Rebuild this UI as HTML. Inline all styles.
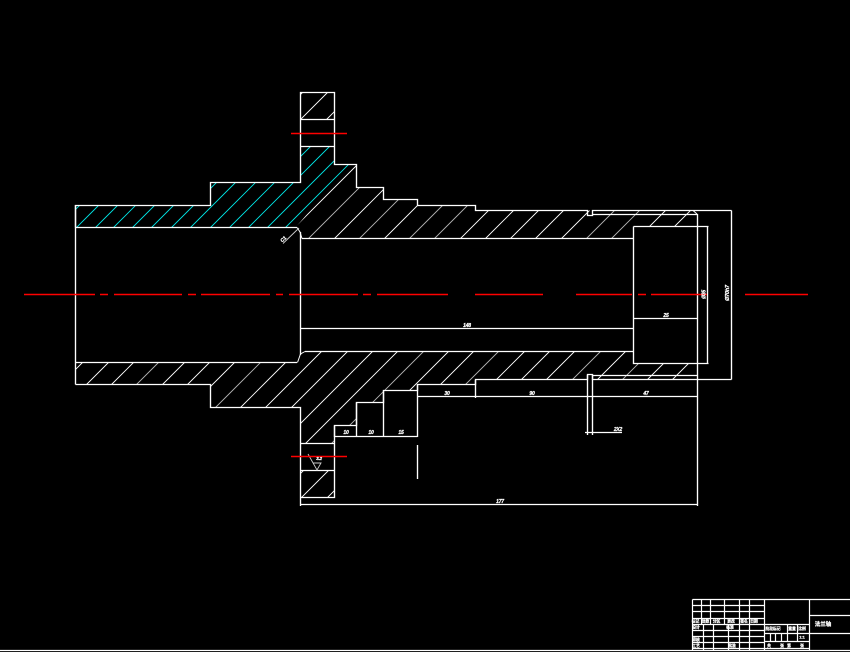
<!DOCTYPE html>
<html><head><meta charset="utf-8"><style>
html,body{margin:0;padding:0;background:#000;width:850px;height:652px;overflow:hidden}
svg{display:block}
text{font-family:"Liberation Sans","Noto Sans CJK SC",sans-serif;fill:#fff;stroke:#fff;stroke-width:.25;font-weight:bold}
.d{font-size:5px;text-anchor:middle;font-style:italic;letter-spacing:-.2px}
.t{font-size:3.8px;text-anchor:middle}
</style></head><body>
<svg width="850" height="652" viewBox="0 0 850 652" xmlns="http://www.w3.org/2000/svg">
<defs>
<clipPath id="cy"><polygon points="75,227 75,205 210,205 210,182 300,182 300,146 334,146 334,164 350,164 296,227"/></clipPath>
<clipPath id="tw"><polygon points="296,227 350,164 356,164 356,187 384,187 384,199 418,199 418,205 476,205 476,210.5 693,210.5 697,214 697,226 633,226 633,238 302,238 300,232"/></clipPath>
<clipPath id="bw"><polygon points="75,362 297,362 300,354 305,351 633,351 633,363 697,363 697,379.5 476,379.5 476,384 417,384 417,390 383,390 383,402 356,402 356,425 334,425 334,443 300,443 300,407 210,407 210,384 75,384"/></clipPath>
<clipPath id="b1"><rect x="300" y="92" width="34" height="27"/></clipPath>
<clipPath id="b2"><rect x="300" y="470" width="34" height="27"/></clipPath>
</defs>
<rect width="850" height="652" fill="#000"/>

<!-- cyan hatch -->
<g clip-path="url(#cy)" stroke="#00e6e6" stroke-width="0.95" fill="none">
<path d="M-165 450L235 50M-146 450L254 50M-127 450L273 50M-109 450L291 50M-90 450L310 50M-71 450L329 50M-51 450L349 50M-32 450L368 50M-12 450L388 50M7 450L407 50M26 450L426 50M45 450L445 50M63 450L463 50"/>
</g>
<!-- white hatch top wall -->
<g clip-path="url(#tw)" stroke="#fff" stroke-width="0.95" fill="none">
<path d="M72 450L472 50M123 450L523 50M173 450L573 50M249 450L649 50M274 450L674 50M299 450L699 50M324 450L724 50M350 450L750 50M426 450L826 50M451 450L851 50"/>
<path stroke="#b4b4b4" d="M97 450L497 50M148 450L548 50M198 450L598 50M223 450L623 50M375 450L775 50M400 450L800 50"/>
</g>
<!-- white hatch bottom wall -->
<g clip-path="url(#bw)" stroke="#fff" stroke-width="0.95" fill="none">
<path d="M-5 450L395 50M21 450L421 50M46 450L446 50M97 450L497 50M122 450L522 50M147 450L547 50M198 450L598 50M223 450L623 50M249 450L649 50M274 450L674 50M299 450L699 50M350 450L750 50M375 450L775 50M426 450L826 50M451 450L851 50M476 450L876 50M527 450L927 50M577 450L977 50M602 450L1002 50"/>
<path stroke="#b4b4b4" d="M71 450L471 50M173 450L573 50M325 450L725 50M400 450L800 50M502 450L902 50M552 450L952 50"/>
</g>
<g clip-path="url(#b1)" stroke="#fff" stroke-width="0.95" fill="none"><path d="M265 130L395 0M290 130L420 0M316 130L446 0"/></g>
<g clip-path="url(#b2)" stroke="#fff" stroke-width="0.95" fill="none"><path d="M274 500L374 400M299 500L399 400M325 500L425 400"/></g>

<!-- outlines -->
<g stroke="#fff" stroke-width="1.35" fill="none">
<path d="M75.5 227.5V205.5H210.5V182.5H300.5V92.5H334.5V164.5H356.5V187.5H383.5V199.5H417.5V205.5H475.5V210.5H587.5V215.5H592.5V210.5H731.5"/>
<path d="M592.5 214.5H697.5V506"/>
<path d="M75.5 227.5H297M75.5 205V384.5M300.5 232V355M302 238.5H633.5"/>
<path d="M75.5 362.5H297M305 351.5H633.5"/>
<path d="M75.5 384.5H210.5V407.5H300.5V506"/>
<path d="M300.5 119.5H334.5M300.5 146.5H334.5"/>
<path d="M300.5 443.5H334.5M300.5 470.5H334.5M300.5 497.5H334.5V425.5H356.5V402.5H383.5V390.5H417.5V384.5H475.5V379.5H587.5V374.5H592.5V379.5H731.5"/>
<path d="M592.5 375.5H697.5"/>
<path d="M633.5 226.5H708.5M633.5 226.5V363.5H708.5M707.5 226.5V363.5M633.5 318.5H697.5M300.5 328.5H633.5"/>
<path d="M731.5 210.5V379.5"/>
<path d="M334.5 436.5H417.5M417.5 384.5V437M356.5 402.5V437M383.5 390.5V437M334.5 425.5V437"/>
<path d="M417.5 396.5H697.5M475.5 380V398"/>
<path d="M587.5 375V435M592.5 375V435M585 432.5H622"/>
<path d="M417.5 445V479"/>
<path d="M300.5 504.5H697.5"/>
</g>
<g stroke="#fff" stroke-width="1" fill="none">
<path d="M297 227.5L300 232L302 238.5M297.5 362.5L300.5 354L305 351.5M693 210.5L697 214"/>
<path stroke="#ccc" stroke-width="0.9" d="M283 243.5L299 228M308 454L317 470L321 463H313"/>
</g>

<!-- centre lines -->
<g stroke="#ff0000" stroke-width="1.4" fill="none">
<path d="M24 294.5H95M100 294.5H108M114 294.5H182M188 294.5H196M201 294.5H270M276 294.5H283M289 294.5H358M363 294.5H371M377 294.5H448M475 294.5H543M576 294.5H632M638 294.5H646M651 294.5H707M745 294.5H808"/>
</g>
<line x1="291" y1="133.5" x2="347" y2="133.5" stroke="#ff0000" stroke-width="1.4"/>
<line x1="291" y1="456.5" x2="347" y2="456.5" stroke="#ff0000" stroke-width="1.4"/>

<!-- dimension text -->
<text class="d" x="467" y="327">148</text>
<text class="d" x="666" y="317">25</text>
<text class="d" x="447" y="395">30</text>
<text class="d" x="532" y="395">90</text>
<text class="d" x="646" y="395">47</text>
<text class="d" x="618" y="431">2X2</text>
<text class="d" x="346" y="434">10</text>
<text class="d" x="371" y="434">10</text>
<text class="d" x="401" y="434">15</text>
<text class="d" x="500" y="503">177</text>
<text class="d" x="283" y="241" transform="rotate(-45 283 239)">C1</text>
<text class="d" x="319" y="460" style="font-size:4.6px">3.2</text>
<text class="d" transform="translate(705.5 294.5) rotate(-90)">Ø35</text>
<text class="d" transform="translate(729 293) rotate(-90)" style="font-size:5.5px">Ø70h7</text>

<!-- title block -->
<g stroke="#fff" stroke-width="1.2" fill="none">
<path d="M0 650.5H850"/>
<path d="M692.5 599.5H850M692.5 605.5H764M692.5 611.5H764M692.5 618.5H764M692.5 624.5H809M692.5 630.5H764M692.5 636.5H764M692.5 642.5H764M692.5 648.5H809"/>
<path d="M692.5 599.5V650M764.5 599.5V650M809.5 599.5V650"/>
<path d="M701.5 599.5V624M710.5 599.5V624M724.5 599.5V624M739.5 599.5V650M749.5 599.5V650"/>
<path d="M703.5 624V650M713.5 624V650M728.5 624V650"/>
<path d="M809.5 615.5H850M809.5 633.5H850M764.5 633.5H809M764.5 641.5H809"/>
<path d="M787.5 624V641M797.5 624V641M770.5 633V641M775.5 633V641M781.5 633V641"/>
</g>
<g>
<text class="t" x="695.5" y="622.5">标记</text>
<text class="t" x="705.5" y="622.5">处数</text>
<text class="t" x="716.5" y="622.5">分区</text>
<text class="t" x="731" y="622.5">更改</text>
<text class="t" x="744" y="622.5">签名</text>
<text class="t" x="754" y="622.5">日期</text>
<text class="t" x="696" y="628.5">设计</text>
<text class="t" x="730" y="628.5">标准</text>
<text class="t" x="696" y="641">审核</text>
<text class="t" x="696" y="647">工艺</text>
<text class="t" x="732" y="647">批准</text>
<text class="t" x="773" y="630">阶段标记</text>
<text class="t" x="792" y="630">重量</text>
<text class="t" x="802" y="630">比例</text>
<text class="t" x="802" y="638.5">1:1</text>
<text class="t" x="769" y="647">共</text>
<text class="t" x="782" y="647">张</text>
<text class="t" x="789" y="647">第</text>
<text class="t" x="802" y="647">张</text>
<text x="823" y="626" style="font-size:5.5px;text-anchor:middle">法兰轴</text>
</g>
</svg>
</body></html>
